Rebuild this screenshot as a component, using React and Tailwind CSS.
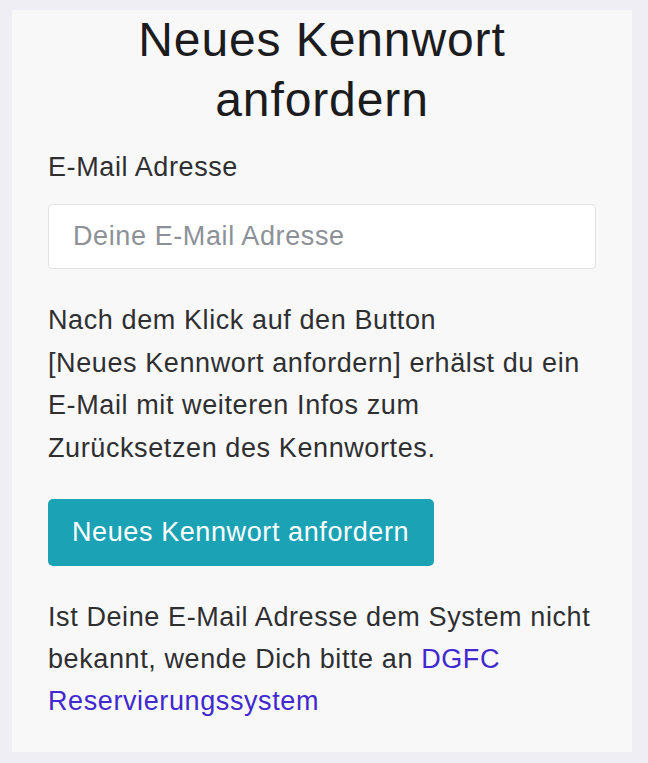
import React from "react";

export default function App() {
  return (
    <div
      className="min-h-[763px] w-full bg-[#eeeef4] pt-[10px] pb-[11px] pl-[12px] pr-[16px]"
      style={{ fontFamily: '"Liberation Sans", Arial, Helvetica, sans-serif' }}
    >
      <div className="flex h-[742px] w-[620px] flex-col bg-[#f8f8f9] px-[36px] pb-[30px]">
        <h1 className="text-center text-[48px] leading-[60px] tracking-[0.9px] text-[#1c1c1e]">
          Neues Kennwort anfordern
        </h1>

        <label className="mt-[16px] block text-[27px] leading-[42px] tracking-[0.6px] text-[#2f2f31]">
          E-Mail Adresse
        </label>

        <input
          type="email"
          placeholder="Deine E-Mail Adresse"
          className="mt-[16px] h-[65px] w-full rounded-[4px] border border-[#e3e3e6] bg-white pl-[24px] pr-[16px] text-[27px] tracking-[0.6px] text-[#2f2f31] placeholder:text-[#8d9197] outline-none"
        />

        <p className="mt-[30px] text-[27px] leading-[42.5px] tracking-[0.6px] text-[#2f2f31]">
          Nach dem Klick auf den Button
          <br />
          [Neues Kennwort anfordern] erhälst du ein E-Mail mit weiteren Infos zum
          Zurücksetzen des Kennwortes.
        </p>

        <div className="mt-[30px] flex">
          <button
            type="button"
            className="flex h-[67px] w-[386px] items-center rounded-[5px] bg-[#1ba3b5] pl-[24px] text-[27px] tracking-[0.6px] text-white"
          >
            Neues Kennwort anfordern
          </button>
        </div>

        <p className="mt-[30px] text-[27px] leading-[42px] tracking-[0.6px] text-[#2f2f31]">
          Ist Deine E-Mail Adresse dem System nicht
          <br />
          bekannt, wende Dich bitte an{" "}
          <a href="#" className="text-[#4128cf]">
            DGFC
          </a>
          <br />
          <a href="#" className="text-[#4128cf]">
            Reservierungssystem
          </a>
        </p>
      </div>
    </div>
  );
}
